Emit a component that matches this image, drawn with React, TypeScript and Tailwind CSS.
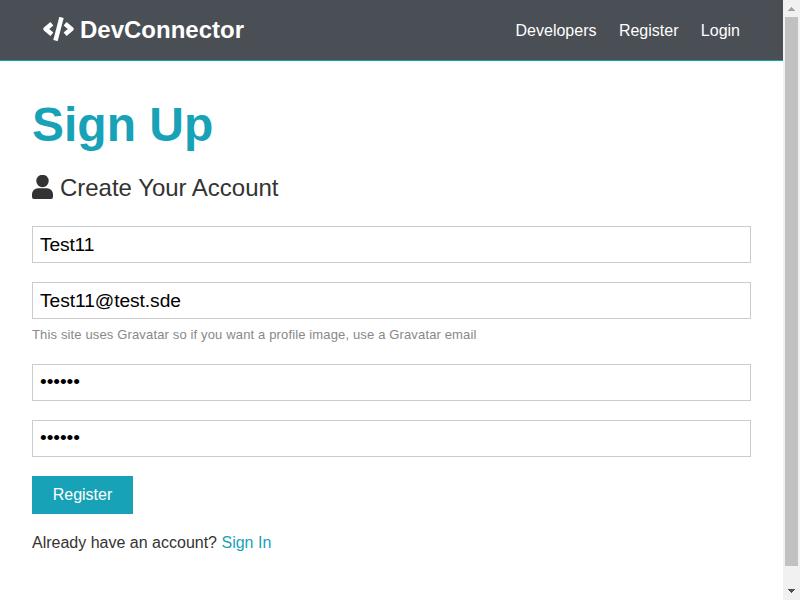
const field = 'block h-[37px] w-full border border-[#ccc] bg-white px-[7px] text-[19.2px] text-black outline-none';

function CodeIcon() {
  return (
    <svg className="mb-[2px] h-[24px] w-[31px]" viewBox="0 0 31 24" fill="none" stroke="currentColor" strokeWidth="4.600" strokeLinejoin="round">
      <path d="M8.900 6.700 2.700 12 8.900 17.300M22.100 6.700 28.300 12 22.100 17.300" />
      <path d="M18.500 .4 12.500 23.600" strokeWidth="4.500" />
    </svg>
  );
}

function UserIcon() {
  return (
    <svg className="h-[24px] w-[21px]" viewBox="0 0 21 24" fill="currentColor">
      <circle cx="10.500" cy="6" r="6.200" />
      <path d="M6 13.200h9a6 6 0 0 1 6 6V22a2 2 0 0 1-2 2H2a2 2 0 0 1-2-2v-2.800a6 6 0 0 1 6-6z" />
    </svg>
  );
}

function Scrollbar() {
  return (
    <div className="flex h-full w-[17px] flex-col items-center bg-[#f1f1f1]">
      <svg className="h-[17px] w-[17px] shrink-0" viewBox="0 0 17 17" shapeRendering="crispEdges"><path d="M8 7h1v1h1v1h1v1h1v1H5v-1h1V9h1V8h1z" fill="#a3a3a3" /></svg>
      <div className="h-[549px] w-[13px] bg-[#c1c1c1]" />
      <div className="flex-1" />
      <svg className="h-[17px] w-[17px] shrink-0" viewBox="0 0 17 17" shapeRendering="crispEdges"><path d="M5 6h7v1h-1v1h-1v1H9v1H8V9H7V8H6V7H5z" fill="#505050" /></svg>
    </div>
  );
}

export default function App() {
  return (
    <div className="flex h-[600px] w-[800px] overflow-hidden bg-white font-['Liberation_Sans',Arial,sans-serif] text-[16px] leading-[25.6px] text-[#333]">
      <div className="w-[783px]">
        <nav className="flex h-[61px] items-center justify-between border-b border-[#17a2b8] bg-[#4a4e55] pr-[43px] pl-[43px] text-white">
          <h1 className="flex items-center gap-[6px] text-[24px] font-bold">
            <CodeIcon />DevConnector
          </h1>
          <ul className="flex gap-[22.4px] pt-[1px]">
            <li>Developers</li><li>Register</li><li>Login</li>
          </ul>
        </nav>
        <main className="px-8 pt-[35px]">
          <h1 className="text-[48px] leading-[58px] font-bold text-[#17a2b8]">Sign Up</h1>
          <p className="mt-[14px] flex h-[38px] items-center gap-[7px] text-[24px]">
            <UserIcon /><span className="pt-[2px] tracking-[-0.02px]">Create Your Account</span>
          </p>
          <form className="mt-[20px]">
            <input className={field + ' tracking-[-0.15px]'} type="text" defaultValue="Test11" />
            <input className={field + ' mt-[19px] tracking-[-0.06px]'} type="email" defaultValue="Test11@test.sde" />
            <small className="mt-[3px] block text-[13px] leading-[25px] tracking-[0.145px] text-[#888]">This site uses Gravatar so if you want a profile image, use a Gravatar email</small>
            <input className={field + ' mt-[17px] pb-[2px] tracking-[-0.08px]'} type="password" defaultValue="123456" />
            <input className={field + ' mt-[19px] pb-[2px] tracking-[-0.08px]'} type="password" defaultValue="123456" />
            <button type="button" className="mt-[19px] block h-[38px] w-[101px] bg-[#17a2b8] text-white">Register</button>
          </form>
          <p className="mt-[16px]">Already have an account? <a className="text-[#17a2b8]">Sign In</a></p>
        </main>
      </div>
      <Scrollbar />
    </div>
  );
}
